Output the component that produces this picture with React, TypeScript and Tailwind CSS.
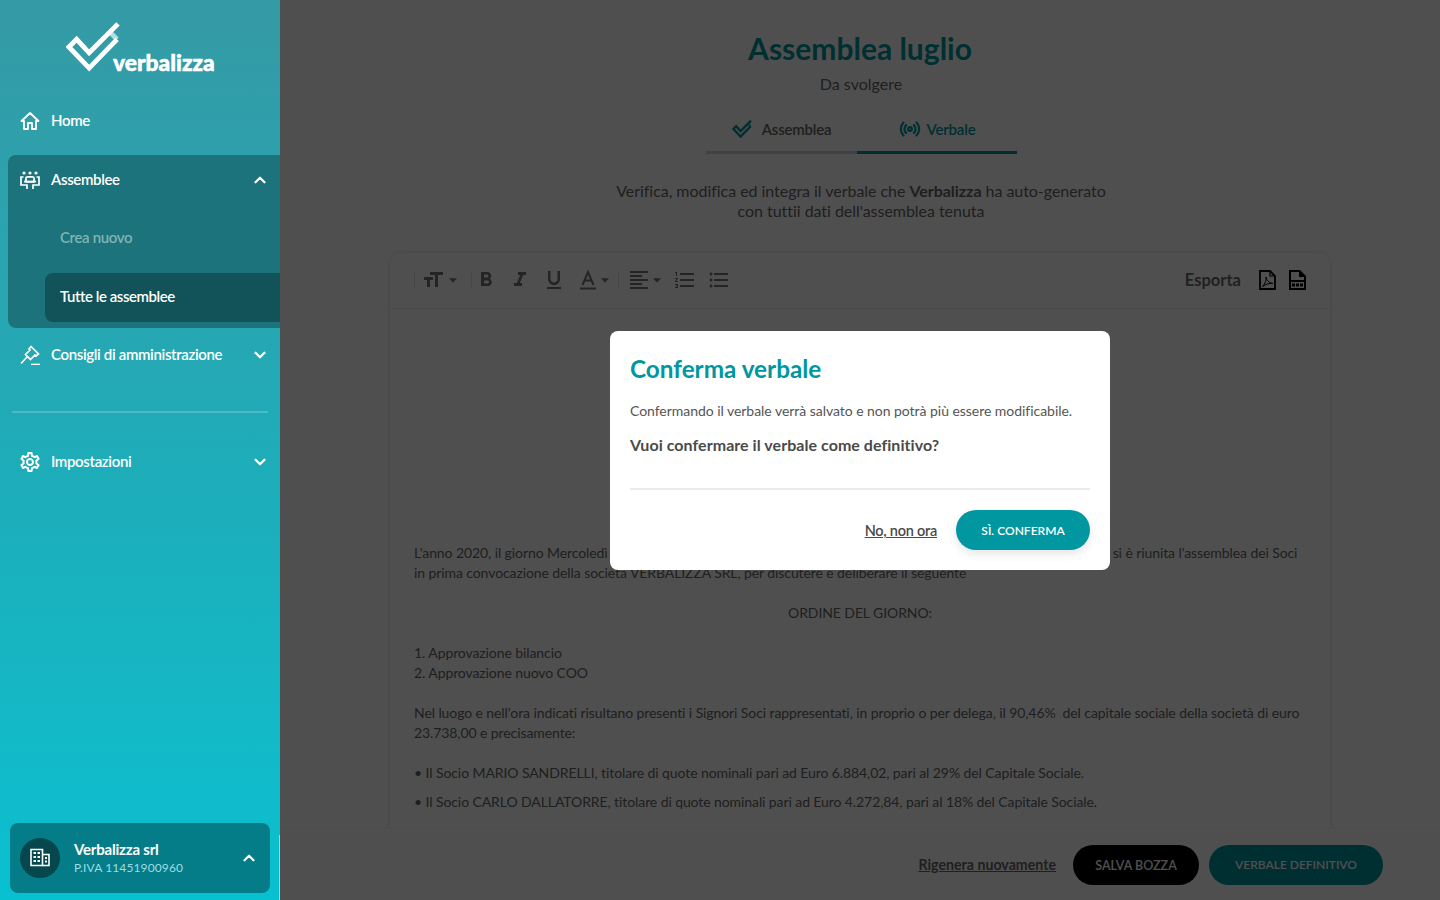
import { ChevronDown, ChevronUp, Radio } from 'lucide-react';
import {
  MdFormatAlignLeft,
  MdFormatBold,
  MdFormatItalic,
  MdFormatListBulleted,
  MdFormatListNumbered,
  MdFormatSize,
  MdFormatUnderlined,
  MdArrowDropDown,
  MdOutlineSettings,
} from 'react-icons/md';

function LogoMark({ className, weight = 5 }: { className?: string; weight?: number }) {
  return (
    <svg viewBox="0 0 56 52" className={className} fill="none" stroke="currentColor" strokeWidth={weight} strokeLinecap="butt" strokeLinejoin="miter">
      <path d="M54 2 L24 32 L11 18 L3 26 L24 48 L53 18" />
      <path d="M53 18 L45 10" strokeOpacity="0.65" />
    </svg>
  );
}

function HomeIcon() {
  return (
    <svg viewBox="0 0 20 20" className="h-[20px] w-[20px]" fill="none" stroke="currentColor" strokeWidth="1.8" strokeLinejoin="round">
      <path d="M1.500 10 L10 2 L18.500 10 H16 V18 H12 V12 H8 V18 H4 V10 Z" />
    </svg>
  );
}

function MeetingIcon() {
  return (
    <svg viewBox="0 0 20 20" className="h-[20px] w-[20px]" fill="none" stroke="currentColor" strokeWidth="1.7">
      <circle cx="4" cy="3" r="1.600" fill="currentColor" stroke="none" />
      <circle cx="10" cy="3" r="1.600" fill="currentColor" stroke="none" />
      <circle cx="16" cy="3" r="1.600" fill="currentColor" stroke="none" />
      <path d="M3.500 7 H1 V15 H7 V19" />
      <path d="M16.500 7 H19 V15 H13 V19" />
      <path d="M6 12 V8 Q6 6.800 8 6.800 H12 Q14 6.800 14 8 V12 Z" />
      <path d="M4 11.500 H16" />
    </svg>
  );
}

function GavelIcon() {
  return (
    <svg viewBox="0 0 20 20" className="h-[20px] w-[20px]" fill="none" stroke="currentColor" strokeWidth="1.7" strokeLinejoin="miter">
      <path d="M11 1.500 L18.500 9 L16 11 L15 10 L10.500 14.500 L5.500 9.500 L10 5 L9 4 Z" />
      <path d="M7 12 L1 18.500" />
      <path d="M11 19.500 H20" />
    </svg>
  );
}

function BuildingIcon() {
  return (
    <svg viewBox="0 0 20 20" className="h-[20px] w-[20px]" fill="none" stroke="currentColor" strokeWidth="1.6">
      <path d="M1 17.500 V1.500 H12.500 V17.500 Z" />
      <path d="M12.500 6.500 H19 V17.500 H12.500" />
      <path d="M3.500 5 H6 M7.500 5 H10 M3.500 9 H6 M7.500 9 H10 M3.500 13 H6 M7.500 13 H10 M15 10 H17 M15 13.500 H17" strokeWidth="2" />
    </svg>
  );
}

function TextColorIcon() {
  return (
    <svg viewBox="0 0 24 24" className="ml-[10px] h-[24px] w-[24px]" fill="none" stroke="currentColor">
      <path d="M6.500 17 L12 4 L17.500 17 M8.300 12.500 H15.700" strokeWidth="2" />
      <path d="M4 20.500 H20" strokeWidth="2" />
    </svg>
  );
}

function PdfIcon() {
  return (
    <svg viewBox="0 0 17 20" className="h-[20px] w-[17px]" fill="none" stroke="currentColor">
      <path d="M1 1 H11 L16 6 V19 H1 Z" strokeWidth="1.800" />
      <path d="M11 1 V6 H16" strokeWidth="1.200" />
      <path d="M3.500 16.500 C6 14 8 9 7 7 C7 10 10 13 14 13.500 C11 13 7 14 3.500 16.500 Z" strokeWidth="1" />
    </svg>
  );
}

function DocIcon() {
  return (
    <svg viewBox="0 0 17 20" className="h-[20px] w-[17px]" fill="currentColor">
      <path fillRule="evenodd" d="M0 0 H11 L17 6 V20 H0 Z M2 2 V10 H15 V7 H10 V2 Z M2 12 V18 H15 V12 Z" />
      <path d="M3 13.500 H6 V16.500 H3 Z M7 13.500 H10 V16.500 H7 Z M11 13.500 H14 V16.500 H11 Z" />
    </svg>
  );
}

function NavRow({ icon, label, open }: { icon: React.ReactNode; label: string; open?: boolean }) {
  return (
    <div className="flex h-[50px] items-center pr-[11px] pl-[12px] text-white">
      <span className="flex w-[31px] shrink-0 items-center">{icon}</span>
      <span className="mb-[2px] flex-1 text-[15px] font-semibold tracking-[-0.35px]">{label}</span>
      {open === undefined ? null : open ? (
        <ChevronUp className="h-[18px] w-[18px]" strokeWidth={3} />
      ) : (
        <ChevronDown className="h-[18px] w-[18px]" strokeWidth={3} />
      )}
    </div>
  );
}

function Sidebar() {
  return (
    <aside className="relative flex h-full w-[280px] shrink-0 flex-col bg-gradient-to-b from-[#349aa5] via-[#1eacb8] to-[#07c0d0]">
      <div className="relative mx-auto mt-[22px] h-[50px] w-[150px]">
        <LogoMark className="ml-[1px] h-[50px] w-[54px] text-white" />
        <span className="absolute top-[26px] left-[48px] text-[22.800px] leading-[28px] font-black text-white [-webkit-text-stroke:0.5px_white]">verbalizza</span>
      </div>
      <div className="mt-[24px] px-[8px]">
        <NavRow icon={<HomeIcon />} label="Home" />
      </div>
      <div className="mt-[9px] ml-[8px] h-[173px] rounded-l-lg bg-[#1d737b]">
        <NavRow icon={<MeetingIcon />} label="Assemblee" open />
        <div className="mt-[8px] flex h-[50px] items-center pb-[2px] pl-[52px] text-[15px] font-semibold tracking-[-0.35px] text-[#7fb3b5]">Crea nuovo</div>
        <div className="mt-[10px] ml-[37px] flex h-[49px] items-center rounded-l-lg bg-[#115359] pb-[2px] pl-[15px] text-[15px] font-semibold tracking-[-0.45px] text-white">Tutte le assemblee</div>
      </div>
      <div className="mt-[2px] px-[8px] [&>div]:pr-[3px]">
        <NavRow icon={<GavelIcon />} label="Consigli di amministrazione" open={false} />
      </div>
      <div className="mx-[12px] mt-[31px] h-[2px] bg-white/20" />
      <div className="mt-[24px] px-[8px] [&>div]:pr-[3px]">
        <NavRow icon={<MdOutlineSettings className="-ml-[2px] h-[24px] w-[24px]" />} label="Impostazioni" open={false} />
      </div>
      <div className="mt-auto mb-[7px] ml-[10px] flex h-[70px] w-[260px] items-center rounded-lg bg-[#047d89] pr-[12px] pl-[10px]">
        <div className="flex h-[40px] w-[40px] items-center justify-center rounded-full bg-[#05474d] text-white">
          <BuildingIcon />
        </div>
        <div className="ml-[14px] flex-1">
          <div className="text-[15px] leading-[18px] font-bold tracking-[-0.2px] text-white">Verbalizza srl</div>
          <div className="mt-[1px] text-[12px] leading-[18px] tracking-[0.12px] text-[#9cdde3]">P.IVA 11451900960</div>
        </div>
        <ChevronUp className="h-[18px] w-[18px] text-white" strokeWidth={3} />
      </div>
      <span className="absolute right-0 bottom-0 h-[65px] w-px bg-white/50" />
    </aside>
  );
}

function Toolbar() {
  const tool = 'h-[24px] w-[24px]';
  return (
    <div className="flex h-[56px] items-center justify-between rounded-t-xl border-b border-[#eeeeee] pr-[24px] pb-[2px] pl-[24px] text-[#757575]">
      <div className="flex items-center">
        <span className="h-[18px] w-px bg-[#e6e6e6]" />
        <MdFormatSize className="ml-[6px] h-[24px] w-[24px]" />
        <MdArrowDropDown className="-ml-[2px] h-[20px] w-[20px]" />
        <span className="ml-[8px] h-[18px] w-px bg-[#e6e6e6]" />
        <MdFormatBold className={`ml-[2px] ${tool}`} />
        <MdFormatItalic className={`ml-[10px] ${tool}`} />
        <MdFormatUnderlined className={`ml-[10px] ${tool}`} />
        <TextColorIcon />
        <MdArrowDropDown className="-ml-[5px] h-[20px] w-[20px]" />
        <span className="mr-[9px] ml-[3px] h-[18px] w-px bg-[#e6e6e6]" />
        <MdFormatAlignLeft className={`-ml-[1px] ${tool}`} />
        <MdArrowDropDown className="-ml-[4px] h-[20px] w-[20px]" />
        <MdFormatListNumbered className={`ml-[6px] ${tool}`} />
        <MdFormatListBulleted className={`ml-[10px] ${tool}`} />
      </div>
      <div className="flex items-center">
        <span className="mt-[2px] mr-[18px] text-[16.500px] font-bold text-[#6a6a6a]">Esporta</span>
        <span className="text-black"><PdfIcon /></span>
        <span className="ml-[13px] text-black"><DocIcon /></span>
      </div>
    </div>
  );
}

function Editor() {
  return (
    <div className="mx-auto mt-[32px] w-[940px] rounded-xl bg-white shadow-[0_0_6px_rgba(0,0,0,0.12)]">
      <Toolbar />
      <div className="px-[24px] pt-[234px] pb-[60px] text-[14px] leading-[20px] tracking-[-0.09px] text-[#666666]">
        <p>
          L'anno 2020, il giorno Mercoledì 15 del mese di luglio, alle ore 10:30, presso la sede sociale della società in Bologna, si è riunita l'assemblea dei Soci
          <br />
          in prima convocazione della società VERBALIZZA SRL, per discutere e deliberare il seguente
        </p>
        <p className="mt-[20px] text-center">ORDINE DEL GIORNO:</p>
        <p className="mt-[20px]">1. Approvazione bilancio</p>
        <p>2. Approvazione nuovo COO</p>
        <p className="mt-[20px]">
          Nel luogo e nell'ora indicati risultano presenti i Signori Soci rappresentati, in proprio o per delega, il 90,46%&nbsp; del capitale sociale della società di euro 23.738,00 e precisamente:
        </p>
        <p className="mt-[20px]">• Il Socio MARIO SANDRELLI, titolare di quote nominali pari ad Euro 6.884,02, pari al 29% del Capitale Sociale.</p>
        <p className="mt-[9px]">• Il Socio CARLO DALLATORRE, titolare di quote nominali pari ad Euro 4.272,84, pari al 18% del Capitale Sociale.</p>
      </div>
    </div>
  );
}

function Tabs() {
  return (
    <div className="mt-[13px] ml-[3px] flex justify-center">
      <div className="flex h-[47px] w-[151px] items-center justify-center gap-[10px] border-b-[3px] border-[#c9dcdc] text-[15px] font-semibold tracking-[-0.2px] text-[#666666]">
        <LogoMark className="h-[18px] w-[20px] text-[#0097a0]" weight={7} />
        Assemblea
      </div>
      <div className="flex h-[47px] w-[160px] items-center justify-center gap-[6px] border-b-[3px] border-[#0097a0] text-[15px] font-semibold tracking-[-0.2px] text-[#0097a0]">
        <Radio className="h-[22px] w-[22px]" strokeWidth={2.4} />
        Verbale
      </div>
    </div>
  );
}

function ConfirmModal() {
  return (
    <div className="absolute inset-0 flex items-center justify-center bg-black/[0.69] text-left">
      <div className="mt-[1px] h-[239px] w-[500px] rounded-lg bg-white p-[20px]">
        <h2 className="mt-[3px] text-[24.300px] leading-[30px] font-bold text-[#0097a0]">Conferma verbale</h2>
        <p className="mt-[17px] text-[14px] leading-[20px] tracking-[-0.04px] text-[#555555]">
          Confermando il verbale verrà salvato e non potrà più essere modificabile.
        </p>
        <p className="mt-[14px] text-[16px] leading-[20px] font-bold tracking-[0.05px] text-[#4a4a4a]">Vuoi confermare il verbale come definitivo?</p>
        <div className="mt-[33px] h-[2px] bg-[#ebebeb]" />
        <div className="mt-[20px] flex items-center justify-end">
          <span className="pt-[2px] text-[14.500px] font-semibold tracking-[-0.25px] text-[#4a4a4a] underline">No, non ora</span>
          <button className="ml-[19px] h-[40px] w-[134px] rounded-full bg-[#0097a0] pt-[1px] text-[12px] font-semibold text-white shadow-[0_4px_10px_rgba(0,0,0,0.1)]">
            SÌ. CONFERMA
          </button>
        </div>
      </div>
    </div>
  );
}

export default function App() {
  return (
    <div className="flex h-screen overflow-hidden bg-white font-['Lato',sans-serif]">
      <Sidebar />
      <main className="relative flex-1 overflow-hidden text-center">
        <h1 className="mt-[29px] text-[30px] leading-[38px] font-bold text-[#0097a0]">Assemblea luglio</h1>
        <p className="mt-[7px] ml-[2px] text-[16px] leading-[20px] text-[#666666]">Da svolgere</p>
        <Tabs />
        <p className="mt-[27px] ml-[2px] text-[16px] leading-[20px] tracking-[-0.04px] text-[#666666]">
          Verifica, modifica ed integra il verbale che <b>Verbalizza</b> ha auto-generato
          <br />
          con tuttii dati dell'assemblea tenuta
        </p>
        <div className="text-left">
          <Editor />
        </div>
        <div className="absolute right-0 bottom-0 left-0 flex h-[71px] items-center justify-end bg-white pr-[57px] shadow-[0_0_4px_rgba(0,0,0,0.06)]">
          <span className="mr-[17px] text-[14.200px] font-bold text-[#666666] underline">Rigenera nuovamente</span>
          <button className="h-[40px] w-[126px] rounded-full bg-black pt-[3px] text-[12.500px] font-semibold text-white">SALVA BOZZA</button>
          <button className="ml-[10px] h-[40px] w-[174px] rounded-full bg-[#0097a0] pt-[1px] text-[12px] font-semibold text-white">VERBALE DEFINITIVO</button>
        </div>
        <ConfirmModal />
      </main>
    </div>
  );
}
